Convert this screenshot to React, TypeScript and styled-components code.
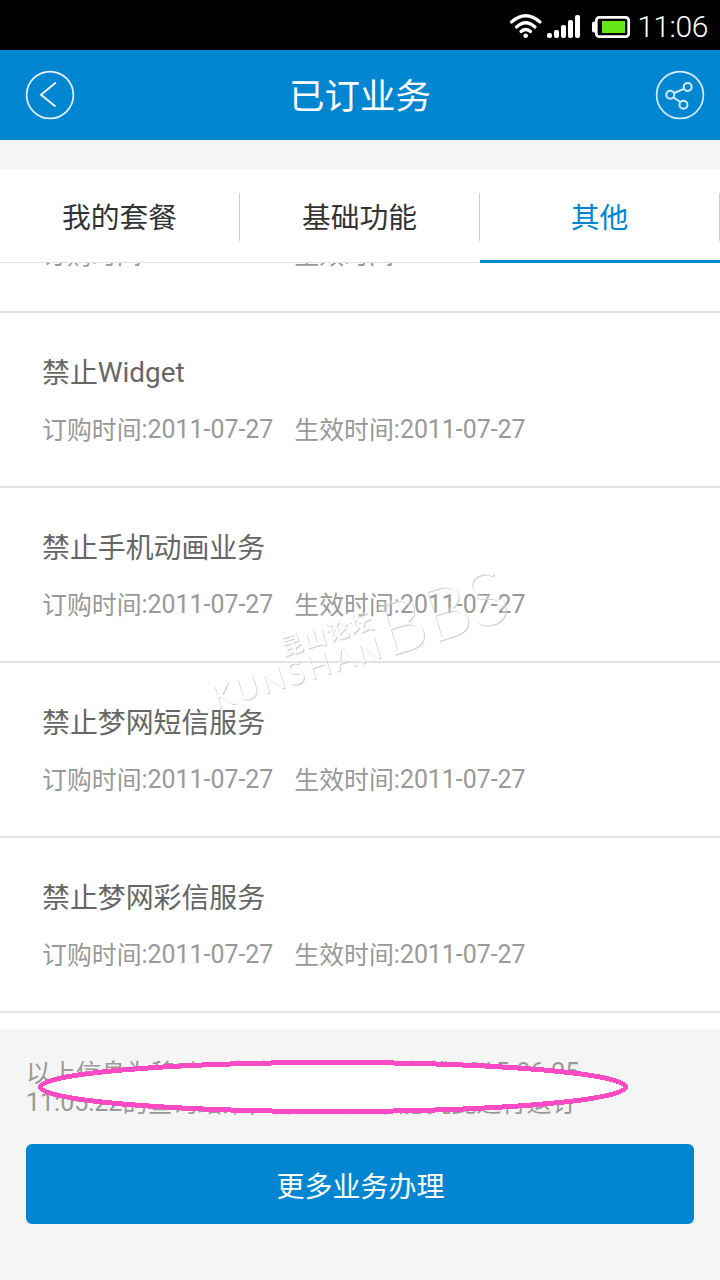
import React from 'react';
import styled, { createGlobalStyle } from 'styled-components';

const Global = createGlobalStyle`
  *{box-sizing:border-box}
  body{margin:0;background:#f5f5f5;font-family:Roboto,"Noto Sans CJK SC",sans-serif}
`;
const Screen = styled.main`
  position:relative;width:720px;height:1280px;overflow:hidden;background:#f5f5f5;
  display:flex;flex-direction:column;
`;
const StatusBar = styled.div`
  height:50px;flex:none;background:#000;display:flex;justify-content:flex-end;align-items:center;padding-right:12px;
`;
const Clock = styled.span`
  color:#fff;font-size:30px;font-weight:300;line-height:36px;letter-spacing:-.4px;margin:4px 0 0 6.5px;white-space:nowrap;
`;
const Header = styled.header`
  height:90px;flex:none;background:#0086d1;display:flex;align-items:center;justify-content:space-between;padding:0 15px 0 25px;
`;
const Title = styled.h1`
  margin:3px 10px 0 0;color:#fff;font-size:35.5px;font-weight:400;line-height:50px;
`;
const IconButton = styled.button`
  border:0;background:none;padding:0;width:50px;height:50px;display:block;
`;
const Tabs = styled.nav`
  margin-top:29px;height:94px;flex:none;display:flex;background:#fff;border-radius:4px 4px 0 0;
`;
const Tab = styled.div<{ $active?: boolean }>`
  flex:1;display:flex;align-items:center;
  border-bottom:${p => (p.$active ? '3px solid #0086d1' : '1px solid #e2e2e2')};
  color:${p => (p.$active ? '#0086d1' : '#333')};
`;
const TabLabel = styled.span<{ $active?: boolean }>`
  flex:1;height:48px;line-height:50px;text-align:center;font-size:28.8px;
  border-right:1px solid #ccc;margin-top:${p => (p.$active ? '4px' : '2px')};
`;
const List = styled.section`
  height:766px;flex:none;background:#fff;overflow:hidden;display:flex;flex-direction:column;justify-content:flex-end;padding-bottom:16px;
`;
const Row = styled.article`
  height:175px;flex:none;border-bottom:2px solid #e2e2e2;padding:41px 42px 0;
`;
const Name = styled.h2`
  margin:0;height:38px;color:#666;font-size:27.9px;font-weight:400;line-height:38px;
`;
const Han = styled.span`
  vertical-align:-1px;line-height:1;
`;
const Dates = styled.div`
  margin-top:20px;height:36px;display:flex;gap:21px;color:#999;font-size:24.9px;line-height:36px;white-space:nowrap;
`;
const Footer = styled.footer`
  flex:1;padding:29px 26px 0;
`;
const Note = styled.div`
  position:relative;height:86px;color:#999;font-size:25px;line-height:30px;white-space:nowrap;
`;
const NoteLine = styled.div`
  height:30px;
`;
const NoteTail = styled.span<{ $gap: number }>`
  margin-left:${p => p.$gap}px;
`;
const Ring = styled.svg`
  position:absolute;left:11px;top:1px;
`;
const Action = styled.button`
  display:block;width:668px;height:80px;border:0;border-radius:6px;background:#0086d1;color:#fff;
  font:400 28px/80px Roboto,"Noto Sans CJK SC",sans-serif;padding:4px 0 0 1px;
`;
const Watermark = styled.svg`
  position:absolute;left:200px;top:560px;pointer-events:none;
`;

const rows = ['禁止彩铃业务', '禁止Widget', '禁止手机动画业务', '禁止梦网短信服务', '禁止梦网彩信服务'];

/* Chinese runs sit one pixel below the Latin baseline in the headings. */
function MixedName({ text }: { text: string }) {
  const han = text.replace(/[A-Za-z]+$/, '');
  return <Name><Han>{han}</Han>{text.slice(han.length)}</Name>;
}

function StatusIcons() {
  return (
    <svg width="122" height="50" viewBox="509 0 122 50" fill="none">
      <g stroke="#fff" strokeWidth="3.2" strokeLinecap="round">
        <path d="M511.500 22Q525.700 9.500 540 22M516.500 27Q525.700 18.500 535 27M521 31.500Q525.700 27.500 530.500 31.500" />
      </g>
      <circle cx="525.700" cy="35.700" r="2.300" fill="#fff" />
      <g fill="#fff">
        <rect x="547" y="33" width="5" height="5" rx="2" />
        <rect x="554" y="30" width="5" height="8" rx="2" />
        <rect x="561" y="25" width="5" height="13" rx="2" />
        <rect x="568" y="20" width="5" height="18" rx="2" />
        <rect x="575" y="15" width="5" height="23" rx="2" />
        <rect x="592" y="21.500" width="5" height="11" rx="2" />
      </g>
      <rect x="596.300" y="17.300" width="32.400" height="19.400" rx="3" stroke="#fff" strokeWidth="2.700" />
      <rect x="602" y="21" width="23" height="12" fill="#69e619" />
    </svg>
  );
}

function KunshanMark() {
  return (
    <Watermark width="340" height="170">
      <filter id="emboss" x="-5%" y="-5%" width="110%" height="110%" colorInterpolationFilters="sRGB">
        <feOffset in="SourceAlpha" dx="1.3" dy="1" result="moved" />
        <feComposite in="moved" in2="SourceAlpha" operator="out" result="edge" />
        <feFlood floodColor="#cfcfcf" />
        <feComposite in2="edge" operator="in" result="shade" />
        <feComponentTransfer in="SourceGraphic" result="light">
          <feFuncA type="linear" slope=".3" />
        </feComponentTransfer>
        <feMerge>
          <feMergeNode in="light" />
          <feMergeNode in="shade" />
        </feMerge>
      </filter>
      <g filter="url(#emboss)">
        <g fill="#fff" transform="translate(17 148) rotate(-17.300)">
          <text x="-2" y="1" fontFamily="Lato" fontSize="32" textLength="176">KUNSHAN</text>
          <text x="78" y="-30" fontFamily="Noto Sans CJK SC" fontSize="23" textLength="96" fontWeight="700">昆山论坛</text>
          <text x="178" y="2" fontFamily="Lato" fontWeight="300" fontSize="75" textLength="132" lengthAdjust="spacingAndGlyphs">BBS</text>
        </g>
      </g>
    </Watermark>
  );
}

export default function App() {
  return (
    <Screen>
      <Global />
      <StatusBar><StatusIcons /><Clock>11:06</Clock></StatusBar>
      <Header>
        <IconButton aria-label="返回">
          <svg width="50" height="50" fill="none" stroke="#e4f3fb">
            <circle cx="25" cy="25" r="23.400" strokeWidth="1.700" />
            <path d="M31 12.500L16 24.700L30.500 36.500" strokeWidth="2" />
          </svg>
        </IconButton>
        <Title>已订业务</Title>
        <IconButton aria-label="分享">
          <svg width="50" height="50" fill="none" stroke="#d5ecf9">
            <circle cx="25" cy="25" r="23.400" strokeWidth="1.700" />
            <g strokeWidth="2">
              <circle cx="15.300" cy="24.700" r="4" /><circle cx="32.700" cy="17" r="4" /><circle cx="28.500" cy="34.700" r="4" />
              <path d="M19 23L29 18.800M18.300 27.500L25.500 32" />
            </g>
          </svg>
        </IconButton>
      </Header>
      <Tabs>
        <Tab><TabLabel>我的套餐</TabLabel></Tab>
        <Tab><TabLabel>基础功能</TabLabel></Tab>
        <Tab $active><TabLabel $active>其他</TabLabel></Tab>
      </Tabs>
      <List>
        {rows.map(name => (
          <Row key={name}>
            <MixedName text={name} />
            <Dates>
              <span><Han>订购时间</Han>:2011-07-27</span>
              <span><Han>生效时间</Han>:2011-07-27</span>
            </Dates>
          </Row>
        ))}
      </List>
      <Footer>
        <Note>
          <NoteLine><Han>以上信息为移动用户当前已订购业务截</Han><NoteTail $gap={2}>2015-06-25</NoteTail></NoteLine>
          <NoteLine>11:05:22<Han>的查询结果，部分业务不能<NoteTail $gap={4}>凭此进行退订</NoteTail></Han></NoteLine>
          <Ring width="592" height="56">
            <ellipse cx="296" cy="28" rx="292.500" ry="24.500" fill="#fff" stroke="#ff4bc3" strokeWidth="5" shapeRendering="crispEdges" />
          </Ring>
        </Note>
        <Action>更多业务办理</Action>
      </Footer>
      <KunshanMark />
    </Screen>
  );
}
